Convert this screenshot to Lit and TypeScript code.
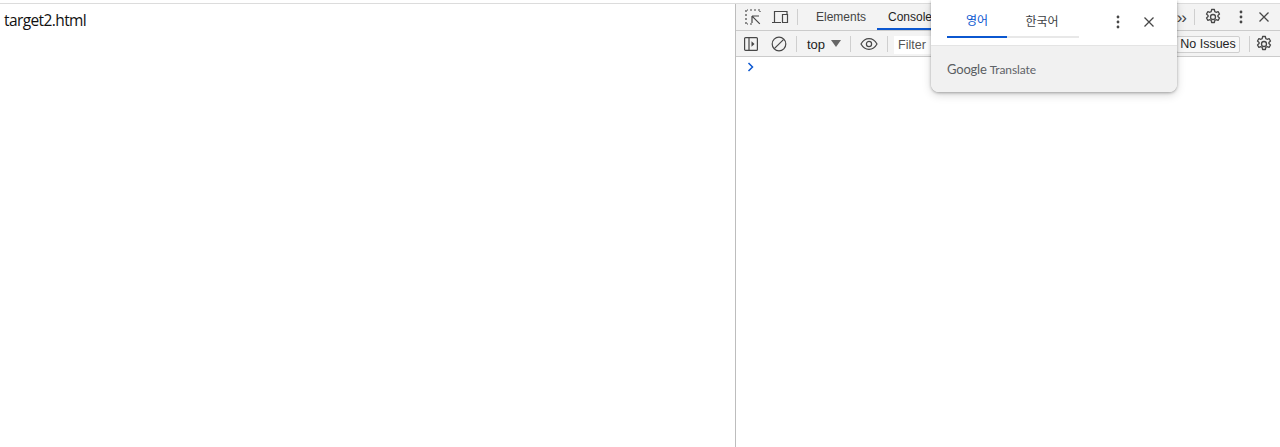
import { LitElement, html, css } from "lit";
import { customElement } from "lit/decorators.js";

const gear = html`<svg class="ic" width="18" height="18" viewBox="0 0 18 18" fill="none" stroke="#474747" stroke-width="1.3" stroke-linejoin="round"><path d="M7.6 1.500h2.800l.4 2.100 1.300.7 2-.7 1.400 2.400-1.600 1.400v1.200l1.600 1.400-1.400 2.400-2-.7-1.300.7-.4 2.100H7.600l-.4-2.100-1.300-.7-2 .7-1.400-2.400 1.600-1.400V7.400L2.500 6l1.400-2.400 2 .7 1.300-.7z"/><circle cx="9" cy="9" r="2.500"/></svg>`;
const kebab = html`<svg class="ic" width="16" height="16" viewBox="0 0 16 16" fill="#474747"><circle cx="8" cy="3" r="1.400"/><circle cx="8" cy="8" r="1.400"/><circle cx="8" cy="13" r="1.400"/></svg>`;
const close = html`<svg class="ic" width="14" height="14" viewBox="0 0 14 14" fill="none" stroke="#474747" stroke-width="1.300"><path d="M2.500 2.500l9 9M11.500 2.500l-9 9"/></svg>`;

@customElement("app-root")
export class AppRoot extends LitElement {
  static styles = css`
    :host { display: block; width: 1280px; height: 447px; overflow: hidden; background: #fff; font-family: "Liberation Sans", Arial, sans-serif; }
    .page { position: relative; display: grid; grid-template-columns: 735px 1fr; height: 444px; margin-top: 3px; border-top: 1px solid #dcdcdc; box-sizing: border-box; }
    .doc { padding: 6px 4px; font: 15.5px/20px "Open Sans", "DejaVu Sans", sans-serif; letter-spacing: -0.6px; color: #111; }
    .dev { border-left: 1px solid #bdbdbd; display: flex; flex-direction: column; min-width: 0; }
    .bar { display: flex; align-items: center; background: #f3f3f3; border-bottom: 1px solid #cbcbcb; box-sizing: border-box; font-size: 12.5px; color: #333; flex: none; }
    .r1 { height: 27px; padding-left: 8px; }
    .r2 { height: 26px; padding-left: 7px; }
    .ic { display: block; flex: none; }
    .sep { width: 1px; height: 16px; background: #cfcfcf; flex: none; }
    .tab { height: 26px; display: flex; align-items: center; box-sizing: border-box; flex: none; font-size: 12px; }
    .el { margin-left: 18px; width: 61px; color: #444; }
    .con { width: 70px; padding-left: 11px; color: #1f1f1f; border-bottom: 2px solid #0b57d0; padding-top: 2px; }
    .push { flex: 1; }
    .filter { margin: 2px 0 0 6px; height: 18px; width: 120px; padding-left: 4px; background: #fff; display: flex; align-items: center; color: #555; flex: none; }
    .top { margin: 2px 6px 0 10px; color: #222; font-size: 13px; }
    .issues { margin-top: 2px; border: 1px solid #cfcfcf; background: #f8f8f8; border-radius: 2px; height: 15px; line-height: 15px; width: 62px; text-align: center; color: #1f1f1f; flex: none; }
    .more { color: #444; font-size: 17px; line-height: 17px; margin-right: 8px; letter-spacing: -1px; }
    .prompt { padding: 5px 0 0 11px; }
    .popup { position: absolute; left: 931px; top: -4px; width: 246px; height: 92px; box-sizing: border-box; background: #fff; border-radius: 0 0 8px 8px; box-shadow: 0 1px 3px rgba(0,0,0,.3), 0 3px 10px rgba(0,0,0,.15); display: flex; flex-direction: column; overflow: hidden; }
    .head { height: 45px; flex: none; display: flex; align-items: flex-start; padding-left: 16px; border-bottom: 1px solid #e4e4e4; }
    .tabs { display: flex; width: 132px; height: 38px; border-bottom: 2px solid #e8e8e8; flex: none; box-sizing: border-box; }
    .ko { height: 38px; width: 60px; display: flex; align-items: center; justify-content: center; box-sizing: border-box; font: 12px "Noto Sans CJK KR", sans-serif; padding-top: 3px; color: #3c4043; flex: none; }
    .ko.sel { color: #0b57d0; border-bottom: 2px solid #0b57d0; }
    .ko.next { width: 70px; }
    .acts { display: flex; align-items: center; gap: 16px; margin: 14px 0 0 31px; }
    .foot { flex: 1; background: #f1f1f1; display: flex; align-items: center; padding: 0 0 0 16px; color: #5f6368; font: 12px Lato, sans-serif; letter-spacing: -0.1px; }
    .foot b { font-weight: 400; font-size: 13px; letter-spacing: -0.2px; margin-right: 3px; color: #5a5e62; }
  `;

  render() {
    return html`
      <div class="page">
        <div class="doc">target2.html</div>
        <div class="dev">
          <div class="bar r1">
            <svg class="ic" width="18" height="18" viewBox="0 0 18 18" fill="none" stroke="#474747" stroke-width="1.200"><path d="M2 8V6M2 4V2h2M6 2h2M10 2h2M14 2h2v2M2 10v2M2 14v2h2M6 16h2" stroke-dasharray="2 1"/><path d="M8 8h7M8 8v7M8.300 8.300l7.500 7.500"/></svg>
            <svg class="ic" style="margin-left:9px" width="18" height="18" viewBox="0 0 18 18" fill="none" stroke="#474747" stroke-width="1.200"><path d="M1 14.500h9M3.500 14V3.500H16V6M11.500 6.500h5v8h-5z"/></svg>
            <div class="sep" style="margin-left:8px"></div>
            <div class="tab el">Elements</div>
            <div class="tab con">Console</div>
            <div class="push"></div>
            <div class="more">››</div>
            <div class="sep"></div>
            <div style="margin-left:9px">${gear}</div>
            <div style="margin-left:11px">${kebab}</div>
            <div style="margin:0 9px 0 8px">${close}</div>
          </div>
          <div class="bar r2">
            <svg class="ic" width="16" height="16" viewBox="0 0 16 16" fill="none" stroke="#474747" stroke-width="1.200"><rect x="1.600" y="1.600" width="12.800" height="12.800" rx="1"/><path d="M6 2v12"/><path d="M8.500 5.200l3 2.800-3 2.800z" fill="#474747" stroke="none"/></svg>
            <svg class="ic" style="margin-left:12px" width="16" height="16" viewBox="0 0 16 16" fill="none" stroke="#474747" stroke-width="1.200"><circle cx="8" cy="8" r="6.800"/><path d="M3.300 12.700l9.400-9.400"/></svg>
            <div class="sep" style="margin-left:9px"></div>
            <div class="top">top</div>
            <svg class="ic" width="10" height="7" viewBox="0 0 10 7" fill="#666"><path d="M0 0h10L5 7z"/></svg>
            <div class="sep" style="margin-left:9px"></div>
            <svg class="ic" style="margin-left:9px" width="18" height="14" viewBox="0 0 18 14" fill="none" stroke="#474747" stroke-width="1.200"><path d="M1 7c2-3.600 5-5.400 8-5.400S15 3.400 17 7c-2 3.600-5 5.400-8 5.400S3 10.600 1 7z"/><circle cx="9" cy="7" r="2.600"/></svg>
            <div class="sep" style="margin-left:9px"></div>
            <div class="filter">Filter</div>
            <div class="push"></div>
            <div class="issues">No Issues</div>
            <div class="sep" style="margin-left:9px"></div>
            <div style="margin:0 7px 0 5px">${gear}</div>
          </div>
          <div class="prompt">
            <svg class="ic" width="7" height="10" viewBox="0 0 7 10" fill="none" stroke="#0b57d0" stroke-width="1.500"><path d="M1.500 1l4 4-4 4"/></svg>
          </div>
        </div>
        <div class="popup">
          <div class="head">
            <div class="tabs">
              <div class="ko sel">영어</div>
              <div class="ko next">한국어</div>
            </div>
            <div class="acts">${kebab}${close}</div>
          </div>
          <div class="foot"><b>Google</b> Translate</div>
        </div>
      </div>
    `;
  }
}
